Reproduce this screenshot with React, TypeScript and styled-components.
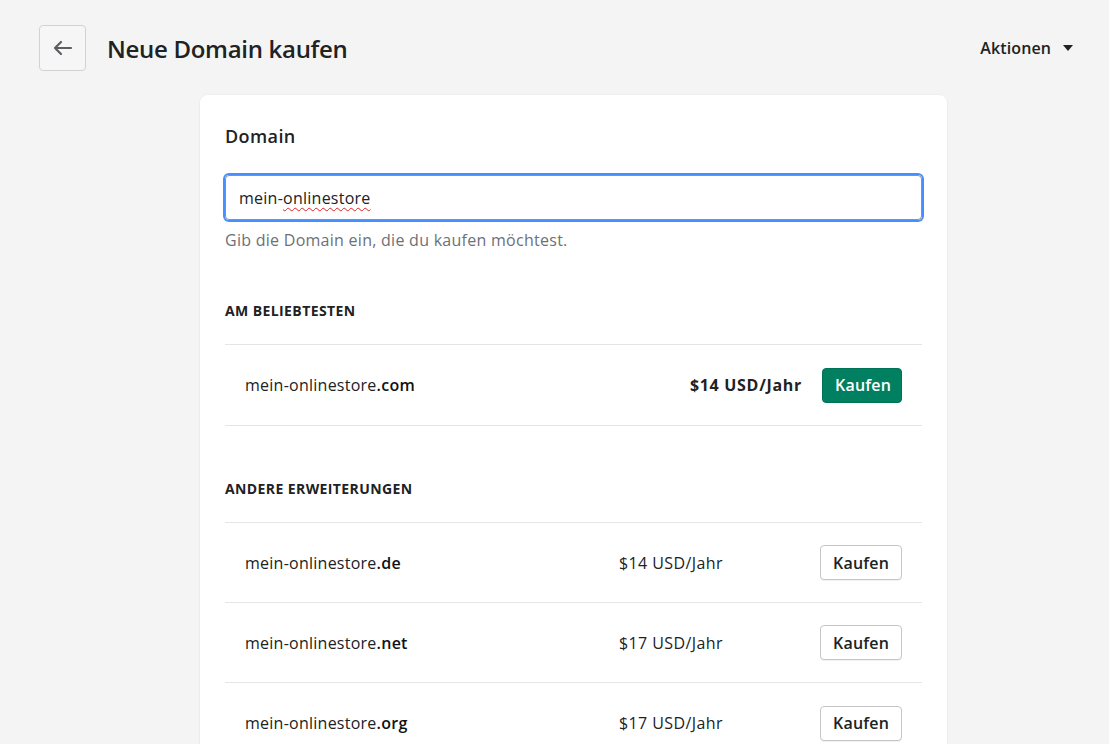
import React from "react";
import styled, { createGlobalStyle } from "styled-components";

const Global = createGlobalStyle`
  html, body { margin: 0; padding: 0; }
  body {
    background: #f4f4f4;
    font-family: "Open Sans", "Noto Sans", "Liberation Sans", sans-serif;
    color: #202223;
  }
`;

const Page = styled.div`
  min-height: 744px;
  padding: 25px 36px 0 39px;
  box-sizing: border-box;
`;

const Header = styled.header`
  display: flex;
  align-items: center;
  gap: 21px;
  height: 46px;
`;

const BackButton = styled.button`
  width: 47px;
  height: 46px;
  border: 1px solid #d2d2d2;
  border-radius: 4px;
  background: #f6f6f6;
  display: flex;
  align-items: center;
  justify-content: center;
  padding: 0;
  color: #5c5f62;
`;

const Title = styled.h1`
  margin: 0;
  flex: 1;
  font-size: 24px;
  font-weight: 600;
  letter-spacing: -0.3px;
  color: #202223;
`;

const Actions = styled.button`
  border: none;
  background: transparent;
  font-family: inherit;
  font-size: 16px;
  font-weight: 600;
  letter-spacing: 0.1px;
  color: #202223;
  display: flex;
  align-items: center;
  gap: 12px;
  padding: 0;
  margin-left: -3px;
`;

const Card = styled.section`
  width: 747px;
  margin: 24px 0 0 161px;
  background: #fff;
  border-radius: 8px;
  box-shadow: 0 0 0 1px rgba(0,0,0,0.02), 0 1px 2px rgba(0,0,0,0.05);
  padding: 25px 25px 0 25px;
  box-sizing: border-box;
  min-height: 660px;
`;

const CardTitle = styled.h2`
  margin: 0;
  font-size: 18px;
  font-weight: 600;
  line-height: 32px;
  letter-spacing: 0.4px;
`;

const Input = styled.div`
  margin-top: 23px;
  height: 45px;
  border: 1px solid #8c9196;
  border-radius: 4px;
  box-shadow: 0 0 0 2px #458fff;
  box-sizing: border-box;
  display: flex;
  align-items: center;
  padding: 1px 13px 0;
  font-size: 16px;
  letter-spacing: 0.25px;
  color: #202223;
`;

const Squiggle = styled.span`
  text-decoration: underline wavy #e02020;
  text-decoration-thickness: 1px;
  text-underline-offset: 3px;
`;

const Help = styled.p`
  margin: 9px 0 0;
  font-size: 16px;
  letter-spacing: 0.27px;
  color: #6d7175;
`;

const SectionLabel = styled.h3<{ $top: number }>`
  margin: ${(p) => p.$top}px 0 0;
  font-size: 14px;
  font-weight: 700;
  line-height: 20px;
  padding-bottom: 23px;
  border-bottom: 1px solid #e4e5e7;
  letter-spacing: 0.4px;
`;

const PopularRow = styled.div`
  display: flex;
  align-items: center;
  gap: 20px;
  height: 80px;
  padding: 0 20px;
  border-bottom: 1px solid #e4e5e7;
`;

const Row = styled.div<{ $last?: boolean }>`
  display: grid;
  grid-template-columns: 1fr 201px 82px;
  align-items: center;
  height: 80px;
  box-sizing: border-box;
  padding: 0 20px;
  border-bottom: ${(p) => (p.$last ? "none" : "1px solid #e4e5e7")};
`;

const DomainName = styled.span`
  flex: 1;
  font-size: 16px;
  letter-spacing: 0.25px;
  color: #202223;
  b { font-weight: 600; color: #111; }
`;

const Price = styled.span<{ $bold?: boolean }>`
  font-size: 16px;
  font-weight: ${(p) => (p.$bold ? 700 : 400)};
  letter-spacing: ${(p) => (p.$bold ? "0.7px" : "0.4px")};
  color: #202223;
`;

const BuyButton = styled.button<{ $primary?: boolean }>`
  height: 35px;
  padding: 0 12px;
  border-radius: 4px;
  font-family: inherit;
  font-size: 16px;
  font-weight: 600;
  letter-spacing: 0.2px;
  cursor: pointer;
  ${(p) =>
    p.$primary
      ? `background: #008060; color: #fff; border: 1px solid #007356; width: 80px;`
      : `background: #fff; color: #202223; border: 1px solid #c4c6c8; width: 82px; box-shadow: 0 1px 0 rgba(0,0,0,0.05);`}
`;

const others = [
  { tld: ".de", price: "$14 USD/Jahr" },
  { tld: ".net", price: "$17 USD/Jahr" },
  { tld: ".org", price: "$17 USD/Jahr" },
];

export default function App() {
  return (
    <>
      <Global />
      <Page>
        <Header>
          <BackButton aria-label="Zurück">
            <svg width="24" height="24" viewBox="0 0 24 24" fill="none">
              <path d="M20 12H4M10 6l-6 6 6 6" stroke="#5c5f62" strokeWidth="2.2" strokeLinecap="round" strokeLinejoin="round" />
            </svg>
          </BackButton>
          <Title>Neue Domain kaufen</Title>
          <Actions>
            Aktionen
            <svg width="10" height="6" viewBox="0 0 10 6">
              <path d="M0 0h10L5 6z" fill="#202223" />
            </svg>
          </Actions>
        </Header>
        <Card>
          <CardTitle>Domain</CardTitle>
          <Input>
            mein-<Squiggle>onlinestore</Squiggle>
          </Input>
          <Help>Gib die Domain ein, die du kaufen möchtest.</Help>
          <SectionLabel $top={50}>AM BELIEBTESTEN</SectionLabel>
          <PopularRow>
            <DomainName>
              mein-onlinestore<b>.com</b>
            </DomainName>
            <Price $bold>$14 USD/Jahr</Price>
            <BuyButton $primary>Kaufen</BuyButton>
          </PopularRow>
          <SectionLabel $top={53}>ANDERE ERWEITERUNGEN</SectionLabel>
          {others.map((o, i) => (
            <Row key={o.tld} $last={i === others.length - 1}>
              <DomainName>
                mein-onlinestore<b>{o.tld}</b>
              </DomainName>
              <Price>{o.price}</Price>
              <BuyButton>Kaufen</BuyButton>
            </Row>
          ))}
        </Card>
      </Page>
    </>
  );
}
